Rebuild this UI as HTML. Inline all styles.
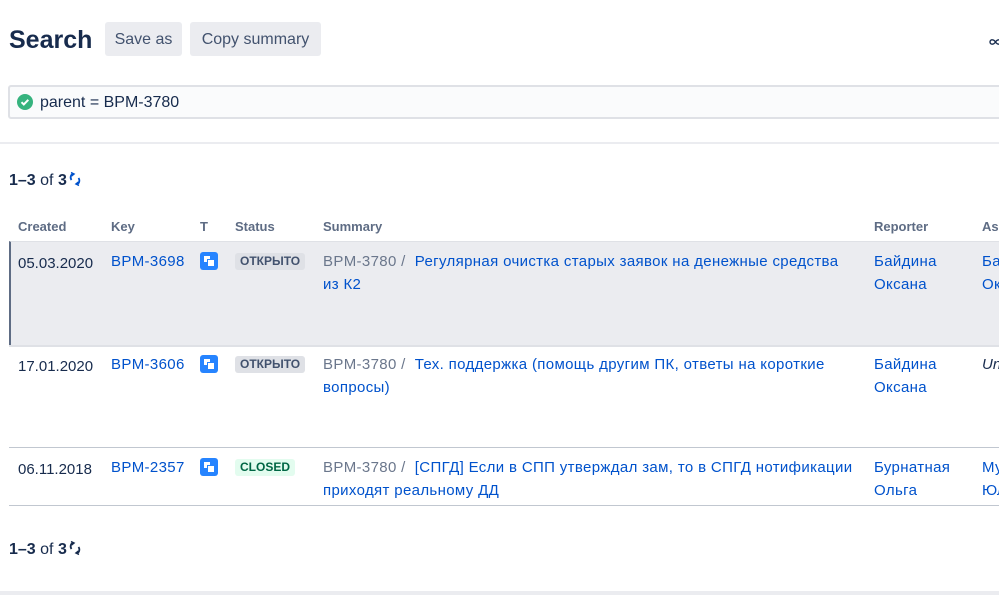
<!DOCTYPE html>
<html><head><meta charset="utf-8"><style>
*{margin:0;padding:0;box-sizing:border-box}
html,body{width:999px;height:595px;overflow:hidden}
body{background:#fff;font-family:"Liberation Sans","Noto Sans CJK SC",sans-serif;color:#172b4d;position:relative;font-size:15px}
.a{position:absolute;white-space:nowrap}
.btn{position:absolute;top:22px;height:34px;background:#ebecf0;border-radius:3px;color:#42526e;font-size:16px;line-height:36px;text-align:center}
.h{position:absolute;top:219px;font-size:13px;font-weight:bold;color:#5e6c84}
.lnk{color:#0052cc}
.ic{position:absolute;left:200px;width:18px;height:18px;background:#2684ff;border-radius:3px}
.ic:before{content:"";position:absolute;left:4px;top:4px;width:6px;height:6px;background:#fff}
.ic:after{content:"";position:absolute;left:8px;top:8px;width:6px;height:6px;background:#fff;border:1px solid #2684ff;box-sizing:content-box;margin:-1px}
.loz{position:absolute;left:235px;height:17px;line-height:17px;padding:0 5px;border-radius:3px;font-size:12px;font-weight:bold;background:#dfe1e6;color:#42526e}
.pre{color:#6b778c}
.s{letter-spacing:0.35px}
</style></head><body>
<div style="position:absolute;left:0;top:0;width:999px;height:595px;overflow:hidden">
<div class="a" style="left:9px;top:22px;font-size:25px;font-weight:bold;line-height:36px">Search</div>
<div class="btn" style="left:105px;width:77px">Save as</div>
<div class="btn" style="left:190px;width:131px">Copy summary</div>
<div class="a" style="left:989px;top:32px;font-size:13px;font-weight:bold">∝</div>
<div style="position:absolute;left:8px;top:85px;width:1000px;height:34px;background:#fafbfc;border:2px solid #dfe1e6;border-radius:3px"></div>
<div style="position:absolute;left:17px;top:94px;width:16px;height:16px;border-radius:50%;background:#36b37e"><svg width="16" height="16" style="position:absolute;left:0;top:0"><path d="M4.5 8.2l2.3 2.3 4.5-4.7" stroke="#fff" stroke-width="2" fill="none"/></svg></div>
<div class="a" style="left:40px;top:93px;font-size:16px;line-height:20px;color:#172b4d">parent = BPM-3780</div>
<div style="position:absolute;left:0;top:142px;width:999px;height:2px;background:#ebecf0"></div>
<div class="a" style="left:9px;top:171px;line-height:18px;font-size:16px"><b>1–3</b> of <b>3</b><svg width="16" height="16" viewBox="0 0 16 16" style="vertical-align:-2px"><path d="M6 3C3.5 3.5 3 7 4.5 9M10 13c2.5-.5 3-4 1.5-6" stroke="#0052cc" stroke-width="1.8" fill="none"/><path d="M4 1.5l3 1.5-2.5 2M12 14.5l-3-1.5 2.5-2" stroke="#0052cc" stroke-width="1.5" fill="none"/></svg></div>
<div class="h" style="left:18px">Created</div><div class="h" style="left:111px">Key</div><div class="h" style="left:200px">T</div><div class="h" style="left:235px">Status</div><div class="h" style="left:323px">Summary</div><div class="h" style="left:874px">Reporter</div><div class="h" style="left:982px">Assignee</div>
<div style="position:absolute;left:9px;top:241px;width:990px;height:104px;background:#ebecf0;border-left:2px solid #5e6c84;border-top:1px solid #dfe1e6"></div>
<div style="position:absolute;left:9px;top:345px;width:990px;height:2px;background:#dfe1e6"></div>
<div style="position:absolute;left:9px;top:447px;width:990px;height:1px;background:#c1c7d0"></div>
<div style="position:absolute;left:9px;top:505px;width:990px;height:1px;background:#c1c7d0"></div>
<div class="a" style="left:18px;top:252px;line-height:23px">05.03.2020</div>
<div class="a lnk s" style="left:111px;top:250px;line-height:23px">BPM-3698</div>
<div class="ic" style="top:252px"></div>
<div class="loz" style="top:253px">ОТКРЫТО</div>
<div class="a s" style="left:323px;top:250px;line-height:23px"><span class="pre">BPM-3780 / </span>&nbsp;<span class="lnk">Регулярная очистка старых заявок на денежные средства</span><br><span class="lnk">из К2</span></div>
<div class="a lnk s" style="left:874px;top:250px;line-height:23px">Байдина<br>Оксана</div>
<div class="a lnk s" style="left:982px;top:250px;line-height:23px">Байдина<br>Оксана</div>
<div class="a" style="left:18px;top:355px;line-height:23px">17.01.2020</div>
<div class="a lnk s" style="left:111px;top:353px;line-height:23px">BPM-3606</div>
<div class="ic" style="top:355px"></div>
<div class="loz" style="top:356px">ОТКРЫТО</div>
<div class="a s" style="left:323px;top:353px;line-height:23px"><span class="pre">BPM-3780 / </span>&nbsp;<span class="lnk">Тех. поддержка (помощь другим ПК, ответы на короткие</span><br><span class="lnk">вопросы)</span></div>
<div class="a lnk s" style="left:874px;top:353px;line-height:23px">Байдина<br>Оксана</div>
<div class="a" style="left:982px;top:353px;line-height:23px;font-style:italic">Unassigned</div>
<div class="a" style="left:18px;top:458px;line-height:23px">06.11.2018</div>
<div class="a lnk s" style="left:111px;top:456px;line-height:23px">BPM-2357</div>
<div class="ic" style="top:458px"></div>
<div class="loz" style="top:459px;background:#e3fcef;color:#006644">CLOSED</div>
<div class="a s" style="left:323px;top:456px;line-height:23px"><span class="pre">BPM-3780 / </span>&nbsp;<span class="lnk">[СПГД] Если в СПП утверждал зам, то в СПГД нотификации</span><br><span class="lnk">приходят реальному ДД</span></div>
<div class="a lnk s" style="left:874px;top:456px;line-height:23px">Бурнатная<br>Ольга</div>
<div class="a lnk s" style="left:982px;top:456px;line-height:23px">Муравьёва<br>Юлия</div>
<div class="a" style="left:9px;top:540px;line-height:18px;font-size:16px"><b>1–3</b> of <b>3</b><svg width="16" height="16" viewBox="0 0 16 16" style="vertical-align:-2px"><path d="M6 3C3.5 3.5 3 7 4.5 9M10 13c2.5-.5 3-4 1.5-6" stroke="#172b4d" stroke-width="1.8" fill="none"/><path d="M4 1.5l3 1.5-2.5 2M12 14.5l-3-1.5 2.5-2" stroke="#172b4d" stroke-width="1.5" fill="none"/></svg></div>
<div style="position:absolute;left:0;top:591px;width:999px;height:4px;background:#ebecf0"></div>
</div>
</body></html>
